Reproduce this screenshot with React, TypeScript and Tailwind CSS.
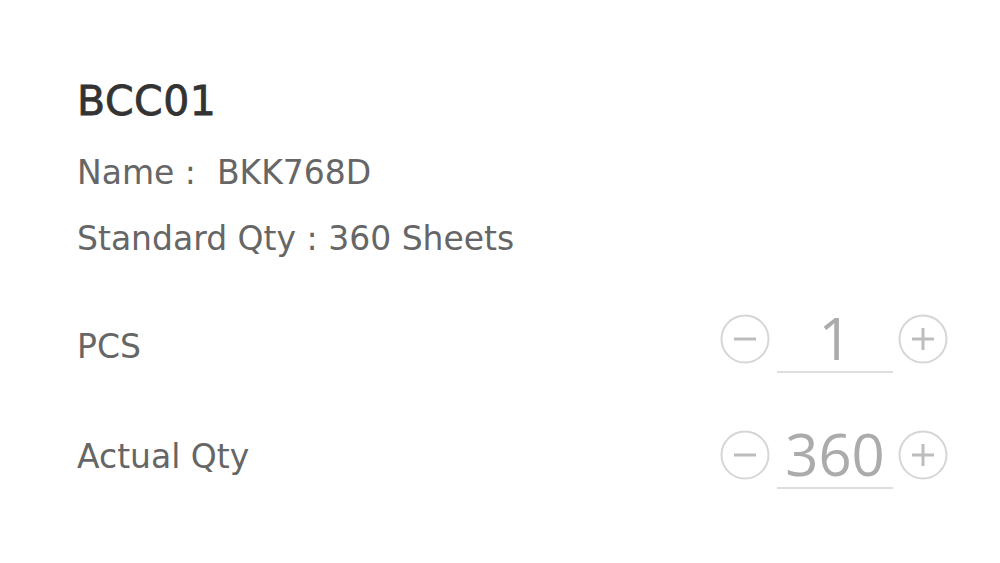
import React from "react";

const font = { fontFamily: '"DejaVu Sans", "Open Sans", sans-serif' };
const numFont = { fontFamily: '"Open Sans", "Lato", sans-serif' };

const Circle: React.FC<{ plus?: boolean }> = ({ plus }) => (
    <svg width="50" height="50" viewBox="0 0 50 50" className="shrink-0">
        <circle cx="25" cy="25" r="23.5" fill="none" stroke="#d6d6d6" strokeWidth="2" />
        <line x1="14" y1="25" x2="36" y2="25" stroke="#bdbdbd" strokeWidth="3" />
        {plus && <line x1="25" y1="14" x2="25" y2="36" stroke="#bdbdbd" strokeWidth="3" />}
    </svg>
);

const Stepper: React.FC<{ value: string; className?: string }> = ({ value, className }) => (
    <div className={`flex items-center ${className ?? ""}`}>
        <Circle />
        <div
            style={numFont}
            className="ml-[7px] mr-[5px] w-[116px] h-[68px] border-b-2 border-[#dedede] flex items-center justify-center text-[58px] text-[#ababab] leading-none"
        >
            {value}
        </div>
        <Circle plus />
    </div>
);

const Row: React.FC<{ label: string; value: string; className?: string; stepperClass?: string }> = ({ label, value, className, stepperClass }) => (
    <div className={`flex items-center justify-between h-[80px] ${className ?? ""}`}>
        <span className="text-[33px] text-[#666666]">{label}</span>
        <Stepper value={value} className={stepperClass} />
    </div>
);

export default function App() {
    return (
        <div style={font} className="w-[1000px] h-[563px] bg-white pl-[77px] pr-[52px] pt-[72px] flex flex-col">
            <div className="h-[60px] flex items-center text-[41px] tracking-[0.5px] text-[#333333] [-webkit-text-stroke:0.8px_#333333]">BCC01</div>
            <div className="h-[50px] mt-[16px] flex items-center text-[33px] text-[#666666] whitespace-pre">Name :  BKK768D</div>
            <div className="h-[50px] mt-[16px] flex items-center text-[33px] text-[#666666]">Standard Qty : 360 Sheets</div>
            <Row label="PCS" value="1" className="mt-[43px]" stepperClass="pb-[16px]" />
            <Row label="Actual Qty" value="360" className="mt-[30px]" stepperClass="pb-[4px]" />
        </div>
    );
}
